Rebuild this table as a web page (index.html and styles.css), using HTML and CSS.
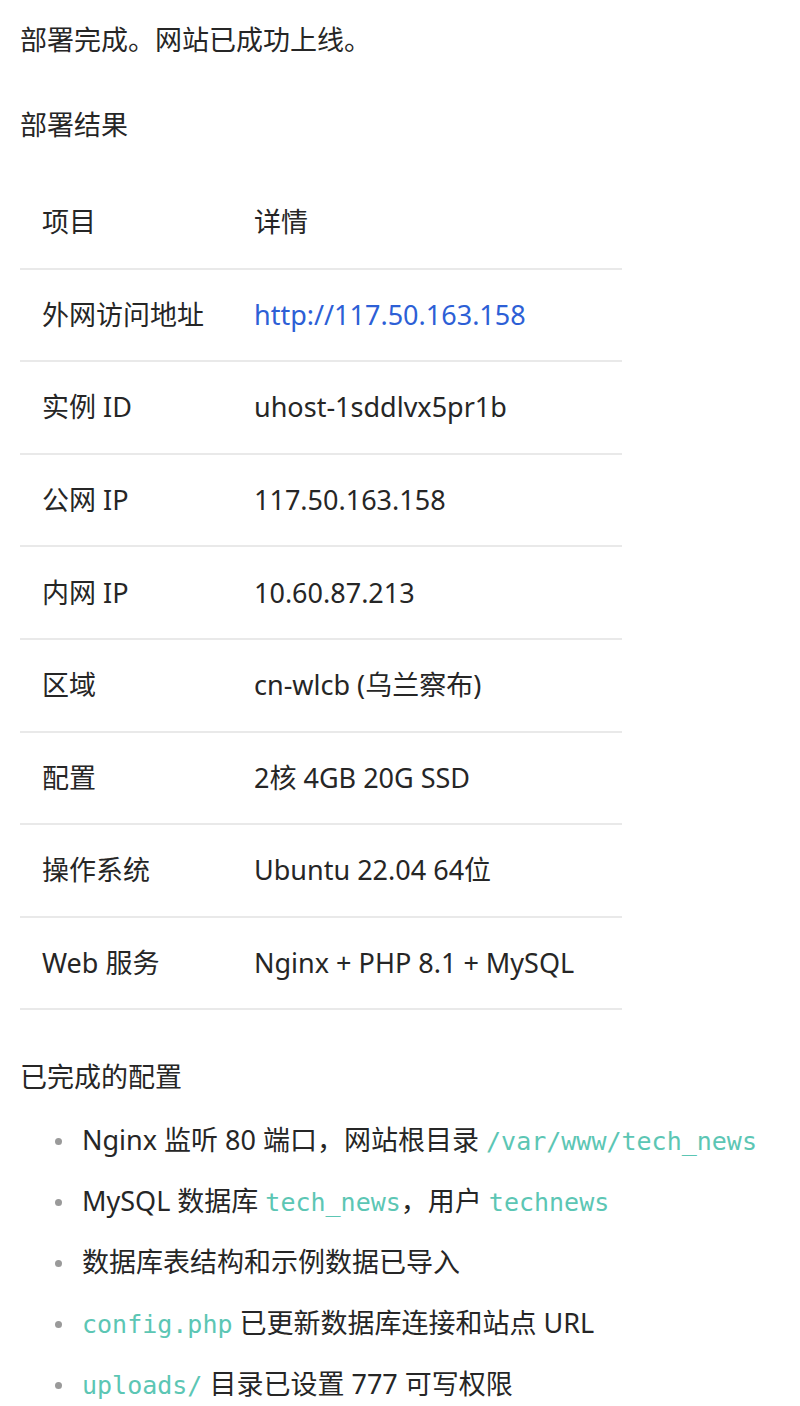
FILE: index.html
```html
<!DOCTYPE html>
<html lang="zh-CN">
<head>
<meta charset="utf-8">
<link rel="stylesheet" href="styles.css">
</head>
<body>
<div class="doc">
  <p class="lead">部署完成。网站已成功上线。</p>
  <p class="heading">部署结果</p>
  <table class="info">
    <colgroup><col class="c1"><col class="c2"></colgroup>
    <thead>
      <tr><th>项目</th><th>详情</th></tr>
    </thead>
    <tbody>
      <tr><td>外网访问地址</td><td><a class="link" href="#">http://117.50.163.158</a></td></tr>
      <tr><td>实例 ID</td><td>uhost-1sddlvx5pr1b</td></tr>
      <tr><td>公网 IP</td><td>117.50.163.158</td></tr>
      <tr><td>内网 IP</td><td>10.60.87.213</td></tr>
      <tr><td>区域</td><td>cn-wlcb (乌兰察布)</td></tr>
      <tr><td>配置</td><td>2核 4GB 20G SSD</td></tr>
      <tr><td>操作系统</td><td>Ubuntu 22.04 64位</td></tr>
      <tr><td>Web 服务</td><td>Nginx + PHP 8.1 + MySQL</td></tr>
    </tbody>
  </table>
  <p class="heading2">已完成的配置</p>
  <ul class="done">
    <li>Nginx 监听 80 端口，网站根目录 <code>/var/www/tech_news</code></li>
    <li>MySQL 数据库 <code>tech_news</code>，用户 <code>technews</code></li>
    <li>数据库表结构和示例数据已导入</li>
    <li><code>config.php</code> 已更新数据库连接和站点 URL</li>
    <li><code>uploads/</code> 目录已设置 777 可写权限</li>
  </ul>
</div>
</body>
</html>
```

FILE: styles.css
```css
html, body {
  margin: 0;
  padding: 0;
  background: #ffffff;
}
body {
  font-family: "Noto Sans", "Noto Sans CJK SC", sans-serif;
  font-size: 27px;
  color: #262626;
}
.doc {
  padding: 19px 0 0 20px;
}
p {
  margin: 0;
  line-height: 42px;
  height: 42px;
}
.heading {
  margin-top: 43px;
}
.info {
  margin-top: 31px;
  width: 602px;
  border-collapse: collapse;
  table-layout: fixed;
}
.info .c1 { width: 212px; }
.info th, .info td {
  text-align: left;
  font-weight: normal;
  line-height: 42px;
  height: 42px;
  padding: 24.3px 22px;
  border-bottom: 2px solid #e9e9e9;
  white-space: nowrap;
}
.link {
  color: #2d5fd6;
  text-decoration: none;
}
.heading2 {
  margin-top: 46px;
}
.done {
  list-style: none;
  margin: 21px 0 0 0;
  padding: 0 0 0 35px;
}
.done li {
  line-height: 42px;
  height: 42px;
  margin-bottom: 19px;
  white-space: nowrap;
}
.done li::before {
  content: "";
  display: inline-block;
  width: 7px;
  height: 7px;
  border-radius: 50%;
  background: #9a9a9a;
  margin-right: 20px;
  vertical-align: middle;
  position: relative;
  top: -2px;
}
code {
  font-family: "DejaVu Sans Mono", monospace;
  font-size: 25px;
  line-height: 1;
  color: #5cc6b4;
}
```
